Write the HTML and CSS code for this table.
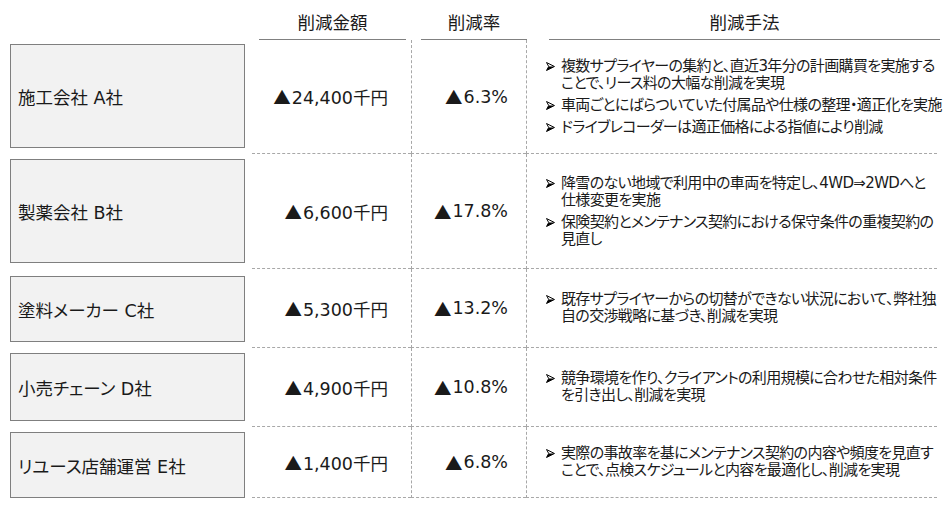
FILE: index.html
```html
<!DOCTYPE html>
<html lang="ja">
<head>
<meta charset="utf-8">
<title>削減事例</title>
<link rel="stylesheet" href="styles.css">
</head>
<body>
<div class="page">
  <div class="head">
    <div class="hcell hc-label"></div>
    <div class="hcell hc-amount"><span>削減金額</span></div>
    <div class="hcell hc-rate"><span>削減率</span></div>
    <div class="hcell hc-method"><span>削減手法</span></div>
  </div>

  <div class="rows">
    <div class="row">
      <div class="label"><div class="box">施工会社 A社</div></div>
      <div class="cell amount"><span class="tri">▲</span>24,400千円</div>
      <div class="cell rate"><span class="tri">▲</span>6.3%</div>
      <div class="cell method">
        <div class="item"><svg class="arw" viewBox="0 0 10 10"><path d="M0.6 0.6 L9.4 5 L0.6 9.4 L3 5 Z" fill="#fff" stroke="#000" stroke-width="1.1" stroke-linejoin="round"/><path d="M3 5 L9.4 5 L0.6 9.4 Z" fill="#000"/></svg><p>複数サプライヤーの集約と、直近3年分の計画購買を実施する<br>ことで、リース料の大幅な削減を実現</p></div>
        <div class="item"><svg class="arw" viewBox="0 0 10 10"><path d="M0.6 0.6 L9.4 5 L0.6 9.4 L3 5 Z" fill="#fff" stroke="#000" stroke-width="1.1" stroke-linejoin="round"/><path d="M3 5 L9.4 5 L0.6 9.4 Z" fill="#000"/></svg><p>車両ごとにばらついていた付属品や仕様の整理・適正化を実施</p></div>
        <div class="item"><svg class="arw" viewBox="0 0 10 10"><path d="M0.6 0.6 L9.4 5 L0.6 9.4 L3 5 Z" fill="#fff" stroke="#000" stroke-width="1.1" stroke-linejoin="round"/><path d="M3 5 L9.4 5 L0.6 9.4 Z" fill="#000"/></svg><p>ドライブレコーダーは適正価格による指値により削減</p></div>
      </div>
    </div>

    <div class="row">
      <div class="label"><div class="box">製薬会社 B社</div></div>
      <div class="cell amount"><span class="tri">▲</span>6,600千円</div>
      <div class="cell rate"><span class="tri">▲</span>17.8%</div>
      <div class="cell method">
        <div class="item"><svg class="arw" viewBox="0 0 10 10"><path d="M0.6 0.6 L9.4 5 L0.6 9.4 L3 5 Z" fill="#fff" stroke="#000" stroke-width="1.1" stroke-linejoin="round"/><path d="M3 5 L9.4 5 L0.6 9.4 Z" fill="#000"/></svg><p>降雪のない地域で利用中の車両を特定し、4WD⇒2WDへと<br>仕様変更を実施</p></div>
        <div class="item"><svg class="arw" viewBox="0 0 10 10"><path d="M0.6 0.6 L9.4 5 L0.6 9.4 L3 5 Z" fill="#fff" stroke="#000" stroke-width="1.1" stroke-linejoin="round"/><path d="M3 5 L9.4 5 L0.6 9.4 Z" fill="#000"/></svg><p>保険契約とメンテナンス契約における保守条件の重複契約の<br>見直し</p></div>
      </div>
    </div>

    <div class="row">
      <div class="label"><div class="box">塗料メーカー C社</div></div>
      <div class="cell amount"><span class="tri">▲</span>5,300千円</div>
      <div class="cell rate"><span class="tri">▲</span>13.2%</div>
      <div class="cell method">
        <div class="item"><svg class="arw" viewBox="0 0 10 10"><path d="M0.6 0.6 L9.4 5 L0.6 9.4 L3 5 Z" fill="#fff" stroke="#000" stroke-width="1.1" stroke-linejoin="round"/><path d="M3 5 L9.4 5 L0.6 9.4 Z" fill="#000"/></svg><p>既存サプライヤーからの切替ができない状況において、弊社独<br>自の交渉戦略に基づき、削減を実現</p></div>
      </div>
    </div>

    <div class="row">
      <div class="label"><div class="box">小売チェーン D社</div></div>
      <div class="cell amount"><span class="tri">▲</span>4,900千円</div>
      <div class="cell rate"><span class="tri">▲</span>10.8%</div>
      <div class="cell method">
        <div class="item"><svg class="arw" viewBox="0 0 10 10"><path d="M0.6 0.6 L9.4 5 L0.6 9.4 L3 5 Z" fill="#fff" stroke="#000" stroke-width="1.1" stroke-linejoin="round"/><path d="M3 5 L9.4 5 L0.6 9.4 Z" fill="#000"/></svg><p>競争環境を作り、クライアントの利用規模に合わせた相対条件<br>を引き出し、削減を実現</p></div>
      </div>
    </div>

    <div class="row">
      <div class="label"><div class="box">リユース店舗運営 E社</div></div>
      <div class="cell amount"><span class="tri">▲</span>1,400千円</div>
      <div class="cell rate"><span class="tri">▲</span>6.8%</div>
      <div class="cell method">
        <div class="item"><svg class="arw" viewBox="0 0 10 10"><path d="M0.6 0.6 L9.4 5 L0.6 9.4 L3 5 Z" fill="#fff" stroke="#000" stroke-width="1.1" stroke-linejoin="round"/><path d="M3 5 L9.4 5 L0.6 9.4 Z" fill="#000"/></svg><p>実際の事故率を基にメンテナンス契約の内容や頻度を見直す<br>ことで、点検スケジュールと内容を最適化し、削減を実現</p></div>
      </div>
    </div>
  </div>
</div>
</body>
</html>
```

FILE: styles.css
```css
html, body {
  margin: 0;
  padding: 0;
  background: #ffffff;
}

body {
  width: 952px;
  height: 507px;
  overflow: hidden;
  color: #1a1a1a;
  font-family: "DejaVu Sans", "Noto Sans CJK JP", sans-serif;
  font-feature-settings: "palt";
}

.page {
  padding-left: 10px;
}

.head,
.row {
  display: grid;
  grid-template-columns: 242px 159px 115px 411px;
}

.hcell {
  height: 40px;
  box-sizing: border-box;
  padding-top: 8px;
  line-height: 30px;
  text-align: center;
  font-size: 17.5px;
}

.hc-amount,
.hc-rate,
.hc-method {
  border-bottom: 1px solid #808080;
}

.hc-amount { margin: 0 5px 0 7px; }
.hc-rate { margin: 0 -1px 0 10px; }
.hc-method { margin: 0 -3px 0 23px; }

.rows {
  display: grid;
  grid-template-rows: 114px 115px 79px 79px 71px;
}

.label {
  display: flex;
  padding: 5px 7px 6px 0;
}

.row:first-child .label { padding-top: 4px; }
.row:nth-child(3) .label { padding-top: 7px; }
.row:last-child .label { padding-bottom: 0; }

.box {
  flex: 1;
  display: flex;
  align-items: center;
  box-sizing: border-box;
  padding-left: 7px;
  background: #f2f2f2;
  border: 1px solid #7f7f7f;
  font-size: 17.5px;
  white-space: nowrap;
}

.cell {
  display: flex;
  align-items: center;
  border-bottom: 1px dashed #a8a8a8;
  font-size: 17.5px;
  white-space: nowrap;
}

.amount {
  justify-content: flex-end;
  padding-right: 23px;
}

.rate {
  justify-content: flex-end;
  padding-right: 18px;
  border-left: 1px dashed #a8a8a8;
}

.tri {
  font-family: "Noto Sans CJK JP", sans-serif;
  font-feature-settings: normal;
  margin-right: 1px;
}

.method {
  flex-direction: column;
  align-items: flex-start;
  justify-content: center;
  gap: 5px;
  padding-left: 19px;
  border-left: 1px dashed #a8a8a8;
  font-size: 15px;
  letter-spacing: -0.65px;
}

.item {
  display: flex;
  align-items: flex-start;
}

.arw {
  width: 9px;
  height: 9px;
  flex: none;
  margin-top: 4px;
  margin-right: 6px;
}

.item p {
  margin: 0;
  line-height: 17px;
  white-space: nowrap;
}
```
